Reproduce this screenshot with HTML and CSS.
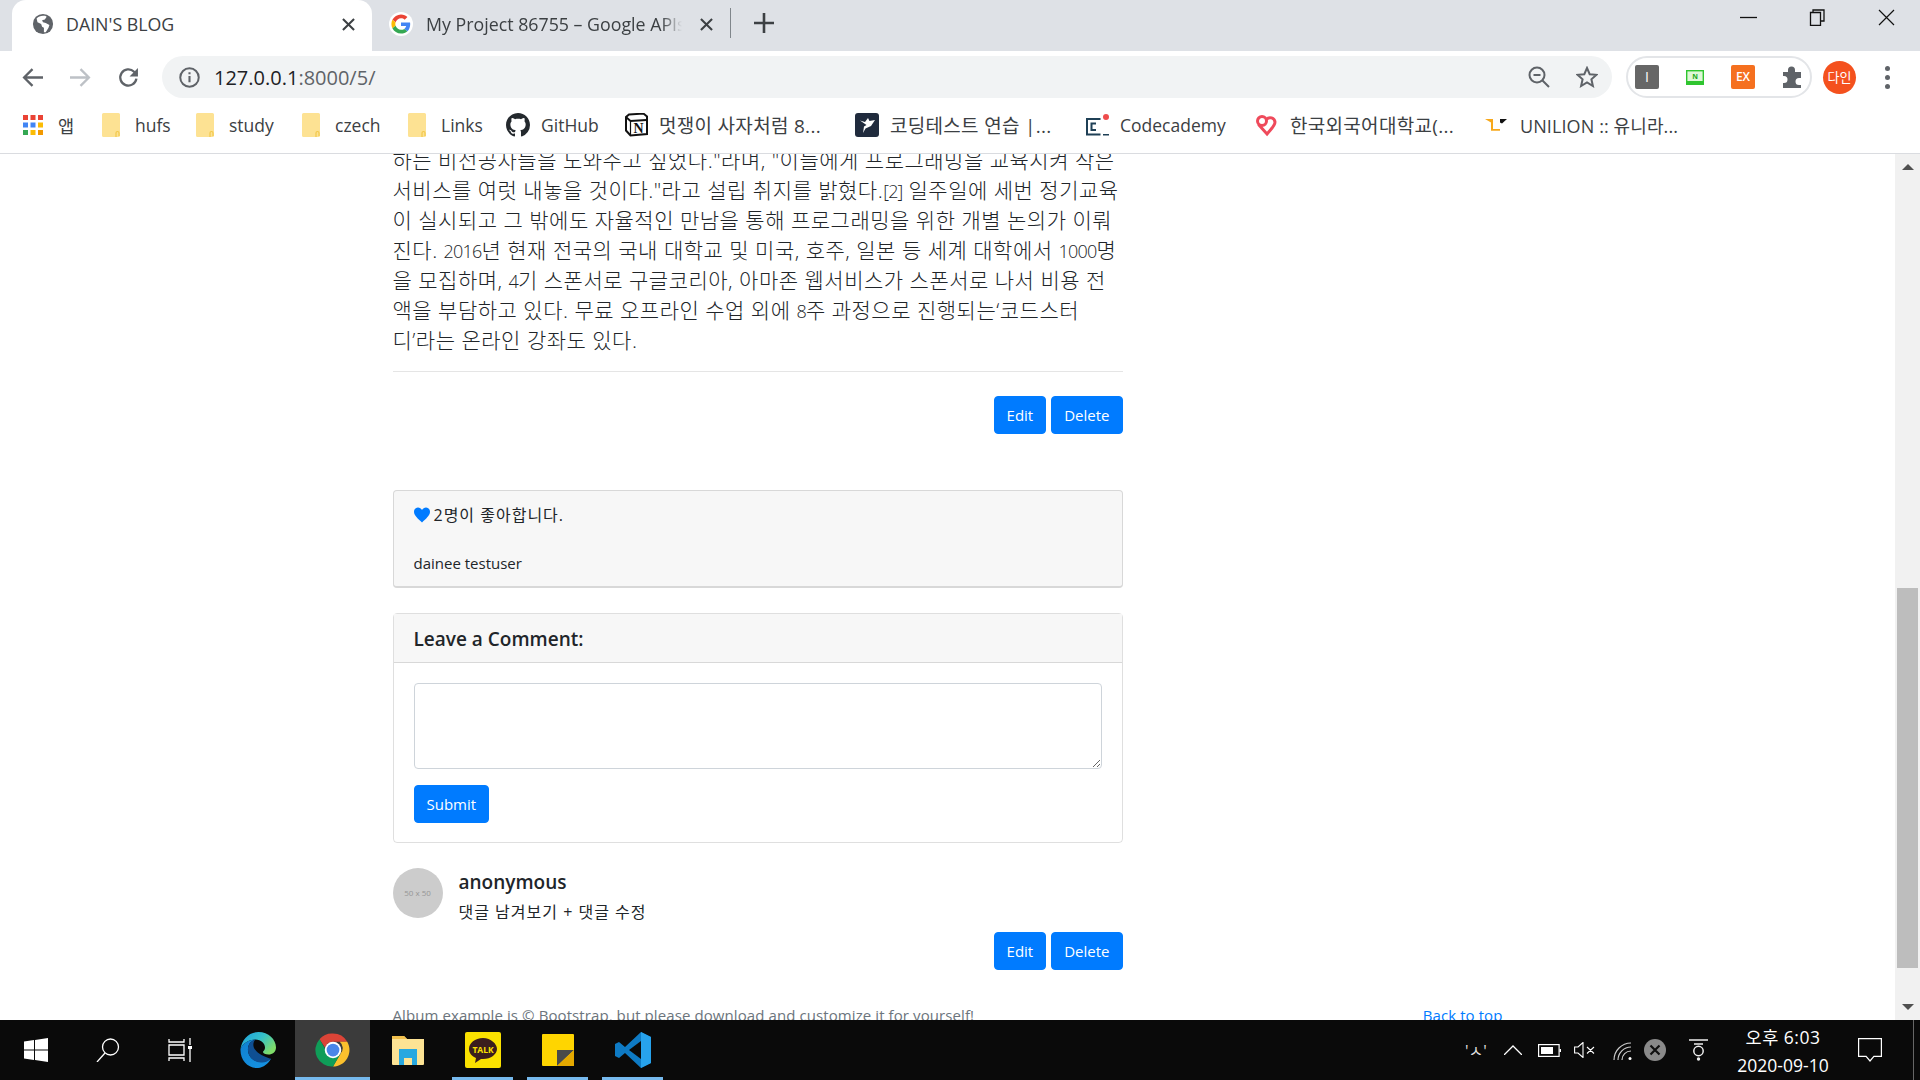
FILE: index.html
```html
<!DOCTYPE html>
<html lang="ko">
<head>
  <meta charset="UTF-8" />
  <meta name="viewport" content="width=device-width, initial-scale=1.0" />
  <title>DAIN'S BLOG</title>
  <link rel="stylesheet" href="styles.css">
</head>
<body>
  <header class="chrome">
    <div class="tabstrip">
      <div class="tab tab-active">
        <svg class="favicon" viewBox="0 0 24 24"><circle cx="12" cy="12" r="11" fill="#5f6368"/><path d="M12 3c-3 0-5 1-7 3l1 4 4 2 1 3 2 1v5h2l3-5 1-3-4-2-3-1-1-2 3-1 2-3c-1-1-2-1-4-1z" fill="#fff"/></svg>
        <span class="tab-title">DAIN'S BLOG</span>
        <svg class="tab-close" viewBox="0 0 14 14"><path d="M1 1l12 12M13 1L1 13" stroke="#3c4043" stroke-width="2.2"/></svg>
      </div>
      <div class="tab">
        <svg class="favicon" viewBox="-6 -6 60 60"><circle cx="24" cy="24" r="30" fill="#fff"/><path fill="#EA4335" d="M24 9.5c3.54 0 6.71 1.22 9.21 3.6l6.85-6.85C35.9 2.38 30.47 0 24 0 14.62 0 6.51 5.38 2.56 13.22l7.98 6.19C12.43 13.72 17.74 9.5 24 9.5z"/><path fill="#4285F4" d="M46.98 24.55c0-1.57-.15-3.09-.38-4.55H24v9.02h12.94c-.58 2.96-2.26 5.48-4.78 7.18l7.73 6c4.51-4.18 7.09-10.36 7.09-17.65z"/><path fill="#FBBC05" d="M10.53 28.59c-.48-1.45-.76-2.99-.76-4.59s.27-3.14.76-4.59l-7.98-6.19C.92 16.46 0 20.12 0 24c0 3.88.92 7.54 2.56 10.78l7.97-6.19z"/><path fill="#34A853" d="M24 48c6.48 0 11.93-2.13 15.89-5.81l-7.73-6c-2.15 1.45-4.92 2.3-8.16 2.3-6.26 0-11.57-4.22-13.47-9.91l-7.98 6.19C6.51 42.62 14.62 48 24 48z"/></svg>
        <span class="tab-title tab-title-long">My Project 86755 – Google APIs</span>
        <svg class="tab-close" viewBox="0 0 14 14"><path d="M1 1l12 12M13 1L1 13" stroke="#3c4043" stroke-width="2.2"/></svg>
      </div>
      <div class="tab-sep"></div>
      <svg class="tab-new" viewBox="0 0 20 20"><path d="M10 0v20M0 10h20" stroke="#3c4043" stroke-width="2.6"/></svg>
      <div class="window-controls">
        <svg viewBox="0 0 17 17"><path d="M0 8.5h17" stroke="#111" stroke-width="1.3"/></svg>
        <svg viewBox="0 0 17 17"><path d="M4 3V1h11v11h-3M1.500 3.500h10v13h-10z" fill="none" stroke="#111" stroke-width="1.3"/></svg>
        <svg viewBox="0 0 17 17"><path d="M1 1l15 15M16 1L1 16" stroke="#111" stroke-width="1.2"/></svg>
      </div>
    </div>

    <div class="toolbar">
      <svg class="nav-icon" viewBox="0 0 20 20"><path d="M20 10H2M10 2l-8 8 8 8" fill="none" stroke="#5f6368" stroke-width="2.2"/></svg>
      <svg class="nav-icon" viewBox="0 0 20 20"><path d="M0 10h18M10 2l8 8-8 8" fill="none" stroke="#bdc1c6" stroke-width="2.2"/></svg>
      <svg class="nav-icon" viewBox="0 0 20 20"><path d="M17.500 11a7.700 7.700 0 1 1-2.200-6.500L18 7" fill="none" stroke="#5f6368" stroke-width="2.2"/><path d="M19 1v8h-8z" fill="#5f6368"/></svg>
      <div class="omnibox">
        <svg class="info-icon" viewBox="0 0 20 20"><circle cx="10" cy="10" r="8.800" fill="none" stroke="#5f6368" stroke-width="1.900"/><path d="M10 8.500v6M10 5v2" stroke="#5f6368" stroke-width="2"/></svg>
        <span class="url"><b>127.0.0.1</b>:8000/5/</span>
        <svg class="omni-icon" viewBox="0 0 22 22"><circle cx="9" cy="9" r="7.500" fill="none" stroke="#5f6368" stroke-width="2"/><path d="M14.500 14.500l6.500 6.500M5.500 9h7" stroke="#5f6368" stroke-width="2"/></svg>
        <svg class="omni-icon" viewBox="0 0 22 22"><path d="M11 2l2.700 6.200 6.800.6-5.100 4.500 1.500 6.700L11 16.500 5.100 20l1.500-6.700L1.500 8.800l6.800-.6z" fill="none" stroke="#5f6368" stroke-width="2"/></svg>
      </div>
      <div class="extensions">
        <div class="ext ext-i">I</div>
        <svg class="ext-naver" viewBox="0 0 18 15"><rect x="0.700" y="0.700" width="16.600" height="13.600" fill="#dff7d8" stroke="#2fc52f" stroke-width="1.400"/><rect x="1" y="11" width="16" height="3" fill="#2fc52f"/><text x="9" y="8.500" class="ext-naver-n">N</text></svg>
        <div class="ext ext-ex">EX</div>
        <svg class="ext-puzzle" viewBox="0 0 24 24"><path d="M3 7h5V5a3.500 3.500 0 0 1 7 0v2h6v6h-2a3.500 3.500 0 0 0 0 7h2v3H3v-5h1a3.500 3.500 0 0 0 0-7H3z" fill="#5f6368"/></svg>
      </div>
      <div class="profile">다인</div>
      <div class="menu-dots"><i></i><i></i><i></i></div>
    </div>

    <nav class="bookmarks">
      <div class="bm">
        <svg class="bm-icon" viewBox="0 0 20 20"><g fill="#ea4335"><rect width="5" height="5"/><rect x="7.500" width="5" height="5"/><rect x="15" width="5" height="5"/></g><g fill="#4285f4"><rect y="7.500" width="5" height="5"/><rect x="7.500" y="7.500" width="5" height="5"/></g><rect x="15" y="7.500" width="5" height="5" fill="#fbbc05"/><g fill="#34a853"><rect y="15" width="5" height="5"/></g><g fill="#fbbc05"><rect x="7.500" y="15" width="5" height="5"/></g><rect x="15" y="15" width="5" height="5" fill="#f29900"/></svg>
        <span>앱</span>
      </div>
      <div class="bm"><svg class="bm-icon" viewBox="0 0 18 24"><path d="M1.500 0h15A1.500 1.500 0 0 1 18 1.500v21a1.500 1.500 0 0 1-1.500 1.500h-15A1.500 1.500 0 0 1 0 22.500v-21A1.500 1.500 0 0 1 1.500 0z" fill="#fde293"/><path d="M14 24v-4a1.500 1.500 0 0 1 3 0v3" fill="none" stroke="#f2c84b" stroke-width="1.200"/></svg><span>hufs</span></div>
      <div class="bm"><svg class="bm-icon" viewBox="0 0 18 24"><path d="M1.500 0h15A1.500 1.500 0 0 1 18 1.500v21a1.500 1.500 0 0 1-1.500 1.500h-15A1.500 1.500 0 0 1 0 22.500v-21A1.500 1.500 0 0 1 1.500 0z" fill="#fde293"/><path d="M14 24v-4a1.500 1.500 0 0 1 3 0v3" fill="none" stroke="#f2c84b" stroke-width="1.200"/></svg><span>study</span></div>
      <div class="bm"><svg class="bm-icon" viewBox="0 0 18 24"><path d="M1.500 0h15A1.500 1.500 0 0 1 18 1.500v21a1.500 1.500 0 0 1-1.500 1.500h-15A1.500 1.500 0 0 1 0 22.500v-21A1.500 1.500 0 0 1 1.500 0z" fill="#fde293"/><path d="M14 24v-4a1.500 1.500 0 0 1 3 0v3" fill="none" stroke="#f2c84b" stroke-width="1.200"/></svg><span>czech</span></div>
      <div class="bm"><svg class="bm-icon" viewBox="0 0 18 24"><path d="M1.500 0h15A1.500 1.500 0 0 1 18 1.500v21a1.500 1.500 0 0 1-1.500 1.500h-15A1.500 1.500 0 0 1 0 22.500v-21A1.500 1.500 0 0 1 1.500 0z" fill="#fde293"/><path d="M14 24v-4a1.500 1.500 0 0 1 3 0v3" fill="none" stroke="#f2c84b" stroke-width="1.200"/></svg><span>Links</span></div>
      <div class="bm"><svg class="bm-icon bm-icon-lg" viewBox="0 0 16 16"><path fill="#24292e" d="M8 0C3.580 0 0 3.580 0 8c0 3.540 2.290 6.530 5.470 7.590.4.070.55-.17.55-.38 0-.19-.01-.82-.01-1.490-2.010.37-2.530-.49-2.690-.94-.09-.23-.48-.94-.82-1.130-.28-.15-.68-.52-.01-.53.63-.01 1.080.58 1.230.82.72 1.210 1.870.87 2.330.66.070-.52.28-.87.51-1.070-1.780-.2-3.640-.89-3.640-3.950 0-.87.31-1.590.82-2.150-.08-.2-.36-1.020.08-2.120 0 0 .67-.21 2.200.82.64-.18 1.320-.27 2-.27.68 0 1.360.09 2 .27 1.530-1.040 2.200-.82 2.200-.82.44 1.100.16 1.920.08 2.120.51.56.82 1.270.82 2.150 0 3.070-1.870 3.750-3.650 3.950.29.25.54.73.54 1.480 0 1.070-.01 1.930-.01 2.200 0 .21.15.46.55.38A8.013 8.013 0 0 0 16 8c0-4.420-3.580-8-8-8z"/></svg><span>GitHub</span></div>
      <div class="bm bm-ko"><svg class="bm-icon bm-icon-lg" viewBox="0 0 24 24"><path d="M5 1.500l14.500-.9L23 3.500v17.500l-16.500 1.500-4.500-5V4z" fill="#fff" stroke="#111" stroke-width="2"/><path d="M2.500 4.500L6.500 8 22.500 7" fill="none" stroke="#111" stroke-width="1.800"/><path d="M6.500 8v14" fill="none" stroke="#111" stroke-width="1.200"/><text x="14.500" y="19.500" class="notion-n">N</text></svg><span>멋쟁이 사자처럼 8...</span></div>
      <div class="bm bm-ko"><svg class="bm-icon bm-icon-lg" viewBox="0 0 24 24"><rect width="24" height="24" rx="3" fill="#202b3d"/><path d="M5 7.500l5 1.500 3-4 1.500 3 5.500-1-4 6-5.500 2.500L8 20l1-6.500 2.500-1.500z" fill="#fff"/></svg><span>코딩테스트 연습 |...</span></div>
      <div class="bm"><svg class="bm-icon bm-icon-lg" viewBox="0 0 24 24"><path d="M15.500 6H2v15.500h13.500" fill="none" stroke="#1f4056" stroke-width="2"/><path d="M11 10.500H6.500v6.500H11" fill="none" stroke="#1f4056" stroke-width="2"/><circle cx="21" cy="4" r="3" fill="#ef4c4c"/><rect x="18" y="21" width="6" height="1.500" fill="#1f4056"/></svg><span>Codecademy</span></div>
      <div class="bm bm-ko"><svg class="bm-icon bm-icon-lg" viewBox="0 0 24 24"><g fill="none" stroke="#ef4a5b" stroke-width="3"><circle cx="7" cy="8" r="4.500"/><path d="M11.500 6.500a4.800 4.800 0 0 1 8.500 2.500c0 4-4.500 7.500-8 12L3.500 11.500"/></g></svg><span>한국외국어대학교(...</span></div>
      <div class="bm bm-mixed"><svg class="bm-icon bm-icon-lg" viewBox="0 0 24 24"><path d="M0 6h8v10h7v1.800H6V9.500z" fill="#f7a81b"/><path d="M15 6h7l-5 4.500-2-1z" fill="#111"/></svg><span>UNILION :: 유니라...</span></div>
    </nav>
  </header>

  <div class="viewport">
    <main class="page">
      <div class="container">
        <article class="post">
          <p class="lead">
            <span class="line">하는 비전공자들을 도와주고 싶었다."라며, "이들에게 프로그래밍을 교육시켜 작은</span>
            <span class="line">서비스를 여럿 내놓을 것이다."라고 설립 취지를 밝혔다.<span class="num">[2]</span> 일주일에 세번 정기교육</span>
            <span class="line">이 실시되고 그 밖에도 자율적인 만남을 통해 프로그래밍을 위한 개별 논의가 이뤄</span>
            <span class="line">진다. <span class="num">2016</span>년 현재 전국의 국내 대학교 및 미국, 호주, 일본 등 세계 대학에서 <span class="num">1000</span>명</span>
            <span class="line">을 모집하며, <span class="num">4</span>기 스폰서로 구글코리아, 아마존 웹서비스가 스폰서로 나서 비용 전</span>
            <span class="line">액을 부담하고 있다. 무료 오프라인 수업 외에 <span class="num">8</span>주 과정으로 진행되는‘코드스터</span>
            <span class="line">디’라는 온라인 강좌도 있다.</span>
          </p>
          <hr class="divider">
          <div class="actions">
            <button class="btn">Edit</button>
            <button class="btn">Delete</button>
          </div>

          <section class="card card-likes">
            <p class="likes-count"><svg class="heart" viewBox="0 0 16 16"><path d="M8 15.500C4 11.500 0 8.500 0 4.700 0 2.200 1.900.5 4 .5c1.700 0 3.100 1 4 2.500C8.900 1.500 10.300.5 12 .5c2.100 0 4 1.700 4 4.200 0 3.800-4 6.800-8 10.800z" fill="#007bff"/></svg><span class="ko">2명이 좋아합니다.</span></p>
            <p class="likes-users">dainee testuser</p>
          </section>

          <section class="card card-comment">
            <h5 class="card-header">Leave a Comment:</h5>
            <div class="card-body">
              <textarea class="form-control"></textarea>
              <button class="btn">Submit</button>
            </div>
          </section>

          <div class="media">
            <div class="avatar"><span>50 x 50</span></div>
            <div class="media-body">
              <h5>anonymous</h5>
              <p class="ko">댓글 남겨보기 + 댓글 수정</p>
            </div>
          </div>
          <div class="actions actions-comment">
            <button class="btn">Edit</button>
            <button class="btn">Delete</button>
          </div>
        </article>

        <footer class="page-footer">
          <span>Album example is © Bootstrap, but please download and customize it for yourself!</span>
          <a href="#">Back to top</a>
        </footer>
      </div>
    </main>
    <div class="scrollbar">
      <div class="arrow arrow-up"></div>
      <div class="thumb"></div>
      <div class="arrow arrow-down"></div>
    </div>
  </div>

  <footer class="taskbar">
    <div class="task-slot task-sys">
      <svg class="sys-icon" viewBox="0 0 24 24"><path d="M0 3.400l10-1.400v9.500H0zM11 1.900L24 0v11.500H11zM0 12.500h10V22L0 20.600zM11 12.500h13V24l-13-1.900z" fill="#fff"/></svg>
    </div>
    <div class="task-slot task-sys">
      <svg class="sys-icon" viewBox="0 0 24 24"><circle cx="14.500" cy="9" r="8" fill="none" stroke="#fff" stroke-width="1.300"/><path d="M9 15L1 24" stroke="#fff" stroke-width="1.300"/></svg>
    </div>
    <div class="task-slot task-sys">
      <svg class="sys-icon" viewBox="0 0 24 24"><path d="M1 1v3h15V1M1 23v-3h15v3M1 7h15v10H1zM22 0v7M22 11v13" fill="none" stroke="#fff" stroke-width="1.300"/><rect x="20" y="8" width="4" height="3" fill="#fff"/></svg>
    </div>
    <div class="task-apps">
      <div class="task-app">
        <svg class="app-icon" viewBox="0 0 36 36">
          <defs>
            <linearGradient id="edgeTop" x1="0" y1="0" x2="1" y2=".6"><stop offset="0" stop-color="#1b9de2"/><stop offset=".55" stop-color="#35c1c8"/><stop offset="1" stop-color="#7fdc6a"/></linearGradient>
            <linearGradient id="edgeBody" x1="0" y1="0" x2=".6" y2="1"><stop offset="0" stop-color="#0f7fcf"/><stop offset="1" stop-color="#1590e0"/></linearGradient>
          </defs>
          <path d="M.5 17C2 7 9 0 18.500 0 28.500 0 36 7.500 36 15.500c0 4.500-3.500 7-7.500 7-3 0-5.500-1-5.500-2.500 0-1 2-1.500 2-4.500 0-4-4-8-9.500-8C9 7.500 2.500 11.500.5 17z" fill="url(#edgeTop)"/>
          <path d="M.5 17c2-5.500 8.500-9.500 15-9.500-5 1.500-8 5.500-7.500 11 .5 7 7 12 14 11.500 3.500-.2 6.500-1.500 9-3.500-3 6-9 10-15 9.500C7 35.500 0 27.500.5 17z" fill="url(#edgeBody)"/>
          <path d="M8 18.500c-.500-5.500 2.500-9.500 7.500-11-2.500 2.500-3 6.500-.5 10 3 4.500 9 7 16 9.500-2.500 2-5.500 3.300-9 3.500-7 .5-13.500-4.500-14-12z" fill="#0f4f93"/>
        </svg>
      </div>
      <div class="task-app task-app-active">
        <svg class="app-icon" viewBox="0 0 48 48"><path fill="#db4437" d="M24 2a22 22 0 0 1 19 11H24a11 11 0 0 0-10.500 8L6 9.500A22 22 0 0 1 24 2z"/><path fill="#fbc02d" d="M43 13a22 22 0 0 1-19 33l10-17a11 11 0 0 0-1-16z"/><path fill="#0f9d58" d="M6 9.500L15 25a11 11 0 0 0 19 4L24 46A22 22 0 0 1 6 9.500z"/><circle cx="24" cy="24" r="11" fill="#fff"/><circle cx="24" cy="24" r="8.500" fill="#4a86e8"/></svg>
      </div>
      <div class="task-app">
        <svg class="app-icon" viewBox="0 0 36 36"><path d="M2 4h12l3 3h17v25a1 1 0 0 1-1 1H3a1 1 0 0 1-1-1z" fill="#fde394"/><path d="M2 4h12l3 3H2z" fill="#f2c14e"/><path d="M9 17h18v16h-5v-7h-8v7H9z" fill="#28a8e0"/></svg>
      </div>
      <div class="task-app task-app-open">
        <svg class="app-icon" viewBox="0 0 36 36"><rect width="36" height="36" rx="2" fill="#fae100"/><path d="M18 6C10 6 4 11 4 17c0 4 3 7.500 7 9l-1 5 6-4h2c8 0 14-5 14-10S26 6 18 6z" fill="#3a1d1d"/><text x="18" y="21" class="talk-text">TALK</text></svg>
      </div>
      <div class="task-app task-app-open">
        <svg class="app-icon app-icon-sticky" viewBox="0 0 32 32"><rect width="32" height="32" rx="1" fill="#ffd500"/><path d="M15 16h17L15 32z" fill="#4a4a4a"/><path d="M32 16v16H15z" fill="#e5a900"/></svg>
      </div>
      <div class="task-app task-app-open">
        <svg class="app-icon" viewBox="0 0 36 36"><path d="M26 0l10 5v26l-10 5L10 21l-6 5-4-2V12l4-2 6 5z" fill="#0e7ac4"/><path d="M26 0l10 5v26l-10 5z" fill="#27a2ec"/><path d="M26 9L14 18l12 9z" fill="#0a0a0a"/></svg>
      </div>
    </div>

    <div class="tray">
      <span class="tray-ime">'ㅅ'</span>
      <svg class="tray-caret" viewBox="0 0 18 10"><path d="M0 10l9-9 9 9" fill="none" stroke="#fff" stroke-width="1.300"/></svg>
      <svg class="tray-battery" viewBox="0 0 23 13"><rect x="0.600" y="0.600" width="20.500" height="11.800" fill="none" stroke="#fff" stroke-width="1.200"/><rect x="3" y="3" width="12" height="7" fill="#fff"/><rect x="21.500" y="5" width="1.500" height="3" fill="#fff"/></svg>
      <svg class="tray-sound" viewBox="0 0 21 16"><path d="M0.600 5h3.400l5-4.500v15l-5-4.500H0.600zM13 5l7 6.500M20 5l-7 6.500" fill="none" stroke="#fff" stroke-width="1.100"/></svg>
      <svg class="tray-wifi" viewBox="0 0 20 18"><g fill="none" stroke="#ccc" stroke-width="1.200"><path d="M1 18A17 17 0 0 1 18 1"/><path d="M5 18A13 13 0 0 1 18 5"/><path d="M9 18a9 9 0 0 1 9-9"/></g><circle cx="17" cy="16.500" r="1.500" fill="#fff"/></svg>
      <svg class="tray-off" viewBox="0 0 22 22"><circle cx="11" cy="11" r="11" fill="#8a8a8a"/><path d="M6.500 6.500l9 9M15.500 6.500l-9 9" stroke="#111" stroke-width="2.200"/></svg>
      <svg class="tray-hangul" viewBox="0 0 19 22"><path d="M0 1h19M5 5h9" stroke="#eee" stroke-width="1.500"/><circle cx="9.500" cy="12" r="4.700" fill="none" stroke="#eee" stroke-width="1.500"/><circle cx="9.500" cy="20" r="1.700" fill="#eee"/></svg>
      <div class="clock"><span class="clock-time">오후 6:03</span><span>2020-09-10</span></div>
      <svg class="tray-notify" viewBox="0 0 24 24"><path d="M.6.600h22.800v17.800h-7.500L12 23l-3.900-4.600H.6z" fill="none" stroke="#fff" stroke-width="1.200"/></svg>
      <div class="show-desktop"></div>
    </div>
  </footer>
</body>
</html>
```

FILE: styles.css
```css
html, body {
  height: 100%;
  margin: 0;
}
body {
  display: flex;
  flex-direction: column;
  overflow: hidden;
  font-family: "Open Sans", "Noto Sans CJK KR", sans-serif;
  font-size: 15px;
  color: #212529;
  background: #fff;
}
svg {
  display: block;
  flex: none;
}

/* browser chrome */
.chrome {
  flex: none;
  height: 154px;
  border-bottom: 1px solid #dadce0;
  box-sizing: border-box;
}
.tabstrip {
  height: 51px;
  display: flex;
  align-items: center;
  background: #dee1e6;
  padding-left: 12px;
}
.tab {
  width: 360px;
  height: 51px;
  box-sizing: border-box;
  display: flex;
  align-items: center;
  padding: 0 17px 0 20px;
  font-size: 17.800px;
  color: #3c4043;
}
.tab + .tab {
  width: 358px;
  padding: 0 17px;
}
.tab-active {
  background: #fff;
  border-radius: 14px 14px 0 0;
}
.favicon {
  width: 22px;
  height: 22px;
  margin-right: 12px;
  margin-top: -3px;
}
.tab + .tab .favicon {
  width: 24px;
  height: 24px;
  margin-right: 13px;
}
.tab-title {
  flex: 1;
  white-space: nowrap;
  overflow: hidden;
  margin-top: -3px;
}
.tab-title-long {
  margin-right: 18px;
  -webkit-mask-image: linear-gradient(to right, #000 92%, transparent);
  mask-image: linear-gradient(to right, #000 92%, transparent);
}
.tab-close {
  width: 13px;
  height: 13px;
  margin-top: -3px;
}
.tab-sep {
  width: 1px;
  height: 30px;
  background: #80868b;
  margin-top: -6px;
}
.tab-new {
  width: 20px;
  height: 20px;
  margin: -6px 0 0 23px;
}
.window-controls {
  margin-left: auto;
  display: flex;
  gap: 52px;
  padding-right: 25px;
  margin-top: -16px;
}
.window-controls svg {
  width: 17px;
  height: 17px;
}

.toolbar {
  height: 52px;
  display: flex;
  align-items: center;
  padding-left: 22px;
  background: #fff;
}
.nav-icon {
  width: 21px;
  height: 21px;
  margin-right: 27px;
}
.omnibox {
  width: 1450px;
  height: 42px;
  margin-left: -4px;
  padding: 0 14px 0 17px;
  box-sizing: border-box;
  display: flex;
  align-items: center;
  background: #f1f3f4;
  border-radius: 21px;
}
.info-icon {
  width: 21px;
  height: 21px;
  margin-right: 14px;
}
.url {
  flex: 1;
  font-size: 20px;
  color: #5f6368;
  margin-top: 1px;
}
.url b {
  font-weight: 400;
  color: #202124;
}
.omni-icon {
  width: 22px;
  height: 22px;
  margin-left: 26px;
}
.extensions {
  margin-left: 14px;
  width: 186px;
  height: 42px;
  box-sizing: border-box;
  border: 2px solid #e3e5e8;
  border-radius: 21px;
  display: flex;
  align-items: center;
  padding-left: 7px;
}
.ext {
  width: 24px;
  height: 24px;
  border-radius: 2px;
  color: #fff;
  text-align: center;
  font-size: 14px;
  line-height: 24px;
}
.ext-i {
  background: #666;
}
.ext-naver {
  width: 18px;
  height: 15px;
  margin: 0 27px;
}
.ext-naver-n {
  font-size: 7px;
  font-weight: 700;
  fill: #18a818;
  text-anchor: middle;
}
.ext-ex {
  background: #f5701f;
  font-size: 12px;
  font-weight: 600;
}
.ext-puzzle {
  width: 24px;
  height: 24px;
  margin-left: 25px;
}
.profile {
  width: 33px;
  height: 33px;
  margin-left: 11px;
  border-radius: 50%;
  background: #f4511e;
  color: #fff;
  font-size: 13px;
  line-height: 33px;
  text-align: center;
}
.menu-dots {
  margin-left: 29px;
  display: flex;
  flex-direction: column;
  gap: 4px;
}
.menu-dots i {
  width: 5px;
  height: 5px;
  border-radius: 50%;
  background: #5f6368;
}

.bookmarks {
  height: 50px;
  display: grid;
  grid-template-columns: 79px 94px 106px 106px 98px 118px 231px 230px 170px 230px 1fr;
  padding: 0 0 6px 23px;
  box-sizing: border-box;
  align-items: center;
  font-size: 17.500px;
  color: #3c4043;
}
.bm {
  display: flex;
  align-items: center;
  gap: 15px;
  white-space: nowrap;
}
.bm-ko {
  font-size: 19px;
  letter-spacing: .3px;
}
.bm-mixed {
  font-size: 18px;
  letter-spacing: .1px;
}
.bm-icon {
  width: 18px;
  height: 24px;
}
.bm:first-child .bm-icon {
  width: 20px;
  height: 20px;
}
.bm-icon-lg {
  width: 24px;
  height: 24px;
  margin-right: -4px;
}
.notion-n {
  font-family: "Liberation Serif", serif;
  font-size: 14px;
  font-weight: 700;
  fill: #111;
  letter-spacing: 0;
  text-anchor: middle;
}

/* page */
.viewport {
  flex: 1;
  min-height: 0;
  display: flex;
}
.page {
  flex: 1;
  min-width: 0;
  overflow: hidden;
}
.container {
  width: 1140px;
  margin: -9px auto 0;
  padding: 0 15px;
  box-sizing: border-box;
}
.post {
  width: 730px;
}
.lead {
  margin: 0 0 16px;
  font-size: 21px;
  font-weight: 300;
  letter-spacing: .5px;
  white-space: nowrap;
}
.line {
  display: block;
  height: 30px;
  line-height: 30px;
}
.num {
  font-size: 18px;
  letter-spacing: -.8px;
}
.divider {
  margin: 0 0 24px;
  border: 0;
  border-top: 1px solid rgba(0,0,0,.1);
}
.actions {
  display: flex;
  justify-content: flex-end;
  gap: 5px;
}
.btn {
  height: 38px;
  padding: 0 12px;
  border: 1px solid #007bff;
  border-radius: 4px;
  background: #007bff;
  color: #fff;
  font: inherit;
}
.card {
  border: 1px solid rgba(0,0,0,.125);
  border-radius: 4px;
  margin-top: 56px;
}
.card-likes {
  height: 98px;
  box-sizing: border-box;
  padding: 12px 20px;
  background: #f7f7f7;
  border-bottom-width: 2px;
}
.likes-count {
  margin: 0 0 24px;
  height: 24px;
  line-height: 24px;
  display: flex;
  align-items: center;
  gap: 4px;
}
.likes-users {
  margin: 0;
  line-height: 24px;
}
.ko {
  font-size: 16px;
  letter-spacing: 1px;
}
.heart {
  width: 16px;
  height: 16px;
}
.card-comment {
  margin-top: 25px;
  height: 230px;
  box-sizing: border-box;
}
.card-header {
  height: 49px;
  box-sizing: border-box;
  margin: 0;
  padding: 0 20px;
  font-size: 19px;
  font-weight: 600;
  line-height: 50px;
  background: #f7f7f7;
  border-bottom: 1px solid rgba(0,0,0,.125);
}
.card-body {
  padding: 20px;
}
.form-control {
  display: block;
  width: 100%;
  height: 86px;
  box-sizing: border-box;
  border: 1px solid #ced4da;
  border-radius: 4px;
  margin-bottom: 16px;
}
.media {
  display: flex;
  margin-top: 25px;
}
.avatar {
  width: 50px;
  height: 50px;
  border-radius: 50%;
  background: #ccc;
  color: #969696;
  font-size: 8px;
  line-height: 50px;
  text-align: center;
  margin-right: 16px;
}
.media-body h5 {
  margin: 2px 0 6px;
  font-size: 19px;
  font-weight: 600;
  line-height: 24px;
}
.media-body p {
  margin: 0;
  height: 24px;
  line-height: 24px;
}
.actions-comment {
  margin-top: 8px;
}
.page-footer {
  display: flex;
  justify-content: space-between;
  margin-top: 33px;
  line-height: 24px;
  letter-spacing: .09px;
  color: #6c757d;
}
.page-footer a {
  color: #007bff;
  text-decoration: none;
}

.scrollbar {
  flex: none;
  width: 25px;
  background: #f1f1f1;
  display: flex;
  flex-direction: column;
  align-items: center;
}
.arrow {
  width: 0;
  height: 0;
  border-left: 6px solid transparent;
  border-right: 6px solid transparent;
}
.arrow-up {
  margin-top: 10px;
  border-bottom: 6px solid #505050;
}
.arrow-down {
  margin-top: 36px;
  border-top: 6px solid #505050;
}
.thumb {
  width: 21px;
  height: 380px;
  margin-top: 418px;
  background: #bdbdbd;
}

/* windows taskbar */
.taskbar {
  flex: none;
  height: 60px;
  display: flex;
  align-items: stretch;
  background: #0a0a0a;
}
.task-slot {
  width: 72px;
  display: flex;
  align-items: center;
  justify-content: center;
}
.sys-icon {
  width: 24px;
  height: 24px;
}
.task-apps {
  display: flex;
  margin-left: 4px;
}
.task-app {
  width: 75px;
  box-sizing: border-box;
  display: flex;
  align-items: center;
  justify-content: center;
  position: relative;
}
.task-app-active {
  background: #3b3b3b;
  box-shadow: inset 0 -3px 0 #76b9ed;
}
.task-app-open::after {
  content: "";
  position: absolute;
  left: 7px;
  right: 7px;
  bottom: 0;
  height: 3px;
  background: #76b9ed;
}
.app-icon {
  width: 36px;
  height: 36px;
}
.app-icon-sticky {
  width: 32px;
  height: 32px;
}
.talk-text {
  font-size: 8.500px;
  font-weight: 700;
  fill: #fae100;
  text-anchor: middle;
}
.tray {
  margin-left: auto;
  display: flex;
  align-items: center;
  color: #fff;
}
.tray-ime {
  color: #ddd;
  font-size: 16px;
  width: 26px;
  white-space: nowrap;
}
.tray-caret {
  width: 18px;
  height: 10px;
  margin-left: 13px;
}
.tray-battery {
  width: 23px;
  height: 13px;
  margin-left: 16px;
}
.tray-sound {
  width: 21px;
  height: 16px;
  margin-left: 13px;
}
.tray-wifi {
  width: 20px;
  height: 18px;
  margin: 2px 0 0 18px;
}
.tray-off {
  width: 22px;
  height: 22px;
  margin-left: 11px;
}
.tray-hangul {
  width: 19px;
  height: 22px;
  margin-left: 23px;
}
.clock {
  width: 120px;
  margin-left: 15px;
  padding-top: 1px;
  display: flex;
  flex-direction: column;
  align-items: center;
  gap: 6px;
  font-size: 17.500px;
  line-height: 22px;
}
.clock-time {
  letter-spacing: .5px;
}
.tray-notify {
  width: 24px;
  height: 24px;
  margin-left: 15px;
}
.show-desktop {
  width: 1px;
  height: 60px;
  margin-left: 31px;
  margin-right: 6px;
  background: #666;
}
```
